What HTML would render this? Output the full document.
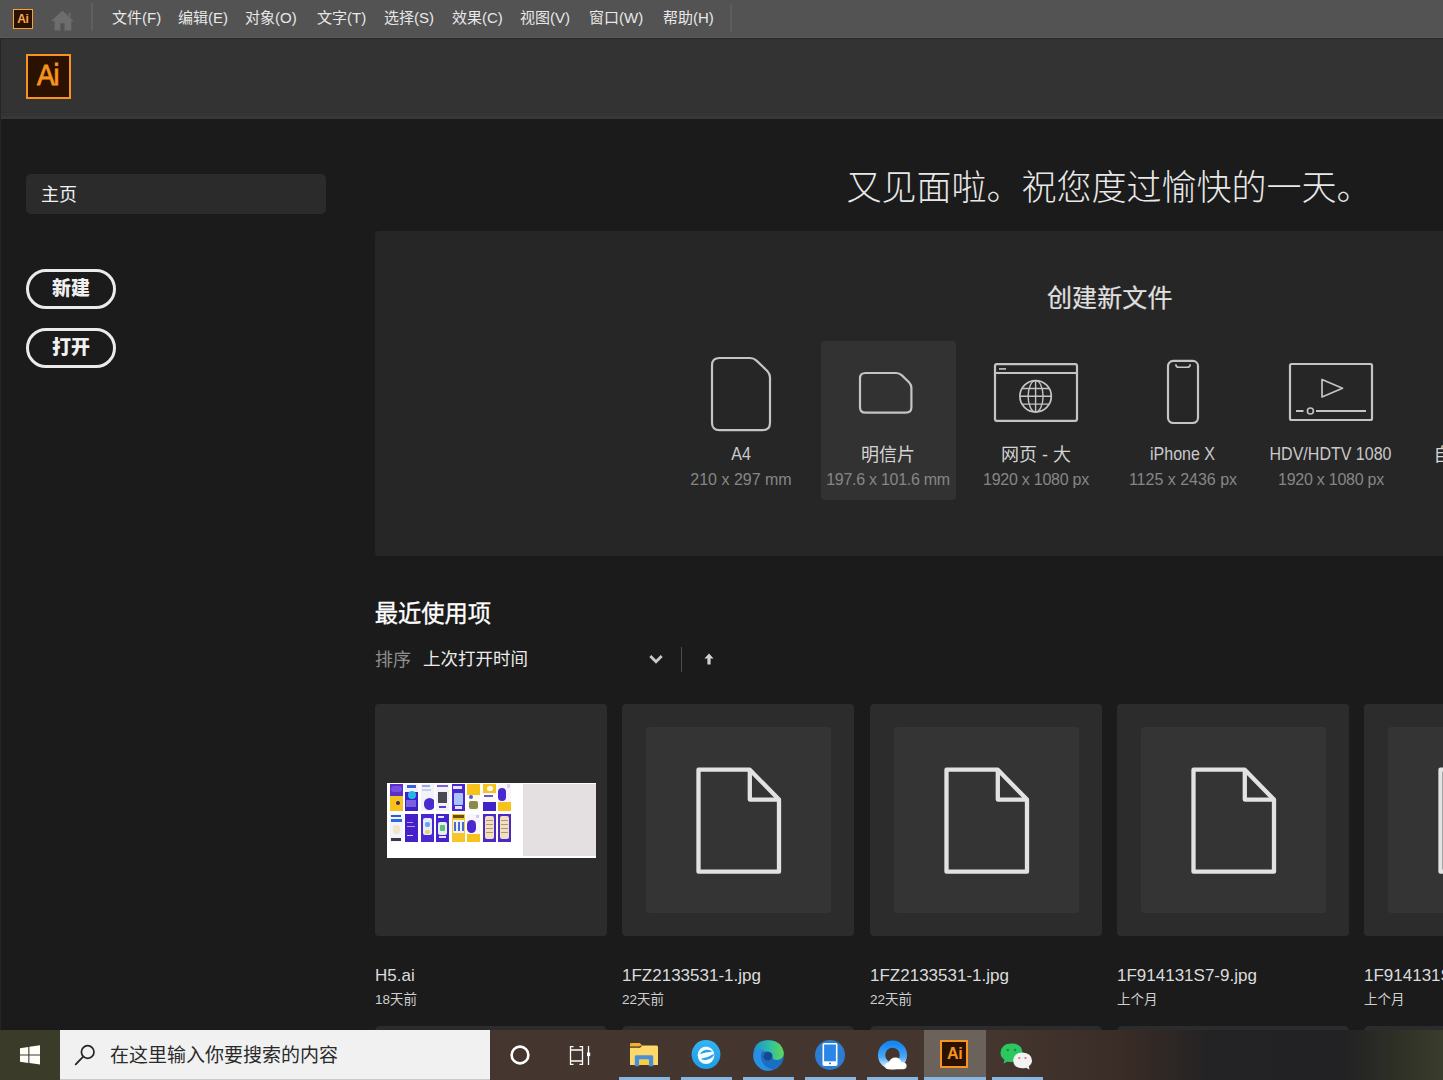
<!DOCTYPE html>
<html lang="zh-CN">
<head>
<meta charset="utf-8">
<title>Adobe Illustrator</title>
<style>
*{box-sizing:border-box;margin:0;padding:0}
html,body{width:1443px;height:1080px;overflow:hidden;background:#1b1b1b}
body{position:relative;font-family:"Liberation Sans","Noto Sans CJK SC",sans-serif;color:#e6e6e6}
.abs{position:absolute}
.t{position:absolute;white-space:nowrap;line-height:1}
/* menubar */
#menubar{left:0;top:0;width:1443px;height:38px;background:#535353;border-bottom:1px solid #5b5b5b}
#menubar .mi{position:absolute;top:9px;font-size:15px;line-height:18px;color:#e8e8e8;white-space:nowrap}
#hdr{left:0;top:38px;width:1443px;height:81px;background:linear-gradient(180deg,#333 0,#333 73px,#2f2f2f 73px,#2f2f2f 74px,#373737 74px,#373737 75px,#333 75px,#333 77px,#383838 77px,#383838 80px);border-top:1px solid #272727}
/* sidebar */
#home{left:26px;top:174px;width:300px;height:40px;border-radius:5px;background:#2b2b2b}
.pill{position:absolute;left:26px;width:90px;height:40px;border:3px solid #ebebeb;border-radius:20px;font-size:19px;font-weight:900;color:#f0f0f0;text-align:center;line-height:34px}
/* panel */
#panel{left:375px;top:231px;width:1068px;height:325px;background:#262626;overflow:hidden;border-radius:4px 0 0 4px}
.pname{position:absolute;top:213px;width:200px;margin-left:-100px;text-align:center;font-size:18px;line-height:20px;color:#d4d4d4;white-space:nowrap;font-weight:400}
.pname i{font-style:normal;color:#cacaca;display:inline-block;transform:scaleX(.89);transform-origin:50% 50%}
.pdim{position:absolute;top:240px;width:200px;margin-left:-100px;text-align:center;font-size:16px;line-height:18px;color:#868686;white-space:nowrap}
/* recents */
.card{position:absolute;top:704px;width:232px;height:232px;border-radius:4px;background:#2c2c2c}
.card .in{position:absolute;left:24px;top:23px;width:185px;height:186px;border-radius:3px;background:#343434}
.card2{position:absolute;top:1026px;width:232px;height:10px;border-radius:5px 5px 0 0;background:#2c2c2c}
.fn{position:absolute;top:965.600px;font-size:17px;line-height:20px;color:#dcdcdc;white-space:nowrap}
.fd{position:absolute;top:992px;font-size:13.500px;line-height:16px;color:#d0d0d0;white-space:nowrap}
/* taskbar */
#taskbar{left:0;top:1030px;width:1443px;height:50px;background:linear-gradient(90deg,#3b3b29 0,#3b3b29 60px,#45362e 60px,#44362f 1000px,#3a2c26 1120px,#2e2725 1170px,#232224 1208px,#222224 1345px,#2b2d26 1385px,#3a3c2c 1443px)}
.ul{position:absolute;top:47px;width:51px;height:3px;background:#86b6e4}
</style>
</head>
<body>

<!-- ===== menubar ===== -->
<div id="menubar" class="abs">
  <div class="abs" style="left:13px;top:8.500px;width:20px;height:20px;background:#2b1200;border:1.500px solid #f9a040"></div>
  <div class="t" style="left:17.300px;top:12.700px;font-size:12px;font-weight:bold;color:#fba850;letter-spacing:-0.400px">Ai</div>
  <svg class="abs" style="left:50px;top:10px" width="25" height="21" viewBox="0 0 25 21"><path d="M12.400 0.400 L23.800 11.300 H21.300 V20.500 H14.500 V13.200 H10.400 V20.500 H4.600 V11.300 H1 Z" fill="#6d6d6d"/><rect x="18.300" y="2.800" width="2.400" height="5" fill="#676767"/></svg>
  <div class="abs" style="left:91px;top:3px;width:2px;height:28px;background:#5e5e5e"></div>
  <div class="mi" style="left:112px">文件(F)</div>
  <div class="mi" style="left:178px">编辑(E)</div>
  <div class="mi" style="left:245px">对象(O)</div>
  <div class="mi" style="left:317px">文字(T)</div>
  <div class="mi" style="left:384px">选择(S)</div>
  <div class="mi" style="left:452px">效果(C)</div>
  <div class="mi" style="left:520px">视图(V)</div>
  <div class="mi" style="left:589px">窗口(W)</div>
  <div class="mi" style="left:663px">帮助(H)</div>
  <div class="abs" style="left:729.500px;top:4px;width:2px;height:28px;background:#5d5d5d"></div>
</div>

<!-- ===== header ===== -->
<div id="hdr" class="abs">
  <div class="abs" style="left:26px;top:15px;width:45px;height:45px;background:#2b1200;border:2px solid #f7931e"></div>
  <div class="t" style="left:36.800px;top:22.400px;font-size:29px;color:#f7931e;letter-spacing:-1.400px;-webkit-text-stroke:0.800px #f7931e;transform:scaleX(.92);transform-origin:0 0">Ai</div>
</div>

<!-- ===== sidebar ===== -->
<div class="abs" style="left:0;top:39px;width:1px;height:80px;background:#262626"></div>
<div class="abs" style="left:0;top:119px;width:1px;height:911px;background:#252525"></div>
<div id="home" class="abs"></div>
<div class="t" style="left:41px;top:186px;font-size:18px;color:#f2f2f2">主页</div>
<div class="pill" style="top:269px">新建</div>
<div class="pill" style="top:328px">打开</div>

<!-- ===== greeting ===== -->
<div class="t" id="greet" style="left:846.500px;top:170px;font-size:35px;font-weight:300;color:#e8e8e8">又见面啦。祝您度过愉快的一天。</div>

<!-- ===== new file panel ===== -->
<div id="panel" class="abs">
  <div class="t" id="ptitle" style="left:672px;top:55px;font-size:25.100px;color:#e0e0e0;-webkit-text-stroke:0.200px #e0e0e0">创建新文件</div>
  <div class="abs" style="left:446px;top:110px;width:135px;height:159px;border-radius:4px;background:#323232"></div>

  <!-- A4 icon : abs 711-771 x 357-431 -->
  <svg class="abs" style="left:334px;top:124px" width="64" height="78" viewBox="0 0 64 78"><path d="M10.500 3 H41 Q44.800 3 47.500 5.600 L58.300 16 Q61 18.800 61 22.500 V67.700 Q61 75.200 53.500 75.200 H10.500 Q3 75.200 3 67.700 V10.500 Q3 3 10.500 3 Z" fill="none" stroke="#c4c4c4" stroke-width="2.200"/></svg>
  <div class="pname" style="left:366px"><i>A4</i></div>
  <div class="pdim" style="left:366px">210 x 297 mm</div>
  <!-- postcard icon: abs 859-912 x 372-414 -->
  <svg class="abs" style="left:482px;top:139px" width="58" height="46" viewBox="0 0 58 46"><path d="M8.500 3 H39.200 Q42.400 3 44.900 5.400 L52 12.300 Q54.400 14.800 54.400 17.900 V37.300 Q54.400 42.700 49 42.700 H8.500 Q3 42.700 3 37.300 V8.500 Q3 3 8.500 3 Z" fill="none" stroke="#c4c4c4" stroke-width="2.200"/></svg>
  <div class="pname" style="left:513px;top:214px">明信片</div>
  <div class="pdim" style="left:513px;letter-spacing:-0.28px">197.6 x 101.6 mm</div>
  <!-- web icon: abs 994-1078 x 363-421 -->
  <svg class="abs" style="left:617px;top:130px" width="88" height="62" viewBox="0 0 88 62"><g fill="none" stroke="#c4c4c4" stroke-width="2.200"><rect x="3" y="3.200" width="82" height="56.600" rx="1.800"/><path d="M3 12 H85"/><path d="M7 7.900 H14" stroke-width="1.600"/><circle cx="43.600" cy="35.300" r="15.700" stroke-width="1.700"/><g stroke-width="1.400"><ellipse cx="43.600" cy="35.300" rx="7.500" ry="15.700"/><path d="M43.600 19.600 V51 M28 35.300 H59.200 M30.200 27.500 H57 M30.200 43.100 H57"/></g></g></svg>
  <div class="pname" style="left:661px;top:214px">网页 - 大</div>
  <div class="pdim" style="left:661px;letter-spacing:-0.25px">1920 x 1080 px</div>
  <!-- phone icon: abs 1167-1199 x 359-424 -->
  <svg class="abs" style="left:790px;top:126px" width="36" height="69" viewBox="0 0 36 69"><g fill="none" stroke="#c4c4c4" stroke-width="2.200"><rect x="3" y="3.900" width="30" height="62.100" rx="5.200"/><path d="M10.800 7.200 Q10.800 10.300 14 10.300 H22 Q25.200 10.300 25.200 7.200" stroke-width="1.600"/></g></svg>
  <div class="pname" style="left:808px"><i>iPhone X</i></div>
  <div class="pdim" style="left:808px">1125 x 2436 px</div>
  <!-- video icon: abs 1289-1373 x 363-421 -->
  <svg class="abs" style="left:912px;top:130px" width="88" height="62" viewBox="0 0 88 62"><g fill="none" stroke="#c4c4c4" stroke-width="2.200"><rect x="3" y="3" width="82" height="56" rx="1.500"/><path d="M35 18.500 V36 L55.500 27.300 Z" stroke-width="1.700" stroke-linejoin="round"/><path d="M9 50 H16.500 M29 50 H79" stroke-width="1.800"/><circle cx="23.400" cy="50" r="3" stroke-width="1.600"/></g></svg>
  <div class="pname" style="left:956px"><i>HDV/HDTV 1080</i></div>
  <div class="pdim" style="left:956px;letter-spacing:-0.25px">1920 x 1080 px</div>
  <div class="pname" style="left:1103.5px;top:214px">自定义大小</div>

</div>

<!-- ===== recents ===== -->
<div class="t" style="left:374.700px;top:603px;font-size:23.300px;font-weight:400;-webkit-text-stroke:0.350px #fff;color:#ffffff">最近使用项</div>
<div class="t" style="left:375px;top:651px;font-size:18px;color:#8e8e8e">排序</div>
<div class="t" style="left:423px;top:651px;font-size:17.5px;color:#ececec">上次打开时间</div>
<svg class="abs" style="left:648px;top:652px" width="16" height="14" viewBox="0 0 16 14"><path d="M2.300 4 L8 9.700 L13.700 4" fill="none" stroke="#cacaca" stroke-width="2.800"/></svg>
<div class="abs" style="left:681px;top:647px;width:1px;height:25px;background:#4c4c4c"></div>
<svg class="abs" style="left:703px;top:653px" width="12" height="12" viewBox="0 0 12 12"><path d="M6 0.6 L10.6 5.6 H7.6 V11.4 H4.4 V5.6 H1.4 Z" fill="#d0d0d0"/></svg>

<div class="card" style="left:375px"><div class="abs" style="left:12px;top:79px;width:209px;height:75px;background:#ffffff"><div class="abs" style="left:136px;top:1px;width:73px;height:72px;background:#e4e0e1"></div><div class="abs" style="left:3.0px;top:1px;width:13px;height:27px;overflow:hidden;background:#f7c21a"><div class="abs" style="left:0px;top:0px;width:13px;height:12px;background:#5a30cc;border-radius:0px"></div><div class="abs" style="left:1px;top:2px;width:11px;height:6px;background:#7a4fe0;border-radius:3px"></div><div class="abs" style="left:6px;top:17px;width:4px;height:4px;background:#3a2a6a;border-radius:2px"></div></div><div class="abs" style="left:18.4px;top:1px;width:13px;height:27px;overflow:hidden;background:#3b22c4"><div class="abs" style="left:0px;top:0px;width:13px;height:8px;background:#f2f4fc;border-radius:0px"></div><div class="abs" style="left:2px;top:1px;width:9px;height:3px;background:#3a5fe0;border-radius:0px"></div><div class="abs" style="left:3px;top:7px;width:8px;height:8px;background:#25b6e6;border-radius:4px"></div><div class="abs" style="left:1px;top:16px;width:10px;height:7px;background:#7a62e0;border-radius:0px"></div></div><div class="abs" style="left:33.9px;top:1px;width:13px;height:27px;overflow:hidden;background:#f1f3fb"><div class="abs" style="left:1px;top:1px;width:8px;height:2px;background:#9aa6e8;border-radius:0px"></div><div class="abs" style="left:1px;top:5px;width:9px;height:2px;background:#c9cff2;border-radius:0px"></div><div class="abs" style="left:3px;top:14px;width:11px;height:12px;background:#4a2bd0;border-radius:6px"></div></div><div class="abs" style="left:49.3px;top:1px;width:13px;height:27px;overflow:hidden;background:#f4f2f8"><div class="abs" style="left:1px;top:1px;width:11px;height:2px;background:#7d5fd8;border-radius:0px"></div><div class="abs" style="left:2px;top:8px;width:9px;height:11px;background:#4a4a52;border-radius:0px"></div><div class="abs" style="left:3px;top:22px;width:7px;height:2px;background:#5a3ad0;border-radius:0px"></div></div><div class="abs" style="left:64.8px;top:1px;width:13px;height:27px;overflow:hidden;background:#4a28d0"><div class="abs" style="left:1px;top:2px;width:9px;height:3px;background:#e8e4ff;border-radius:0px"></div><div class="abs" style="left:2px;top:9px;width:9px;height:12px;background:#a9c4f6;border-radius:1px"></div><div class="abs" style="left:3px;top:22px;width:7px;height:3px;background:#e8e4ff;border-radius:0px"></div></div><div class="abs" style="left:80.2px;top:1px;width:13px;height:27px;overflow:hidden;background:#fbfaf6"><div class="abs" style="left:0px;top:0px;width:13px;height:11px;background:#f7c21a;border-radius:0px"></div><div class="abs" style="left:2px;top:11px;width:4px;height:4px;background:#4a5ad0;border-radius:2px"></div><div class="abs" style="left:2px;top:17px;width:9px;height:8px;background:#8a8a4a;border-radius:2px"></div></div><div class="abs" style="left:95.7px;top:1px;width:13px;height:27px;overflow:hidden;background:#fbfaf6"><div class="abs" style="left:0px;top:0px;width:13px;height:9px;background:#f7c21a;border-radius:0px"></div><div class="abs" style="left:4px;top:2px;width:6px;height:5px;background:#ffffff;border-radius:3px"></div><div class="abs" style="left:0px;top:18px;width:13px;height:9px;background:#3f25c6;border-radius:0px"></div><div class="abs" style="left:1px;top:11px;width:9px;height:2px;background:#6a5ac8;border-radius:0px"></div></div><div class="abs" style="left:111.1px;top:1px;width:13px;height:27px;overflow:hidden;background:#f7c21a"><div class="abs" style="left:0px;top:0px;width:13px;height:18px;background:#f7f5fa;border-radius:0px"></div><div class="abs" style="left:0px;top:4px;width:8px;height:13px;background:#4a28cf;border-radius:6px"></div><div class="abs" style="left:9px;top:0px;width:3px;height:4px;background:#d8d4f0;border-radius:0px"></div></div><div class="abs" style="left:3.0px;top:31px;width:13px;height:28px;overflow:hidden;background:#f3f5fc"><div class="abs" style="left:1px;top:1px;width:10px;height:2px;background:#3a55d8;border-radius:0px"></div><div class="abs" style="left:1px;top:5px;width:11px;height:3px;background:#2a6ae0;border-radius:0px"></div><div class="abs" style="left:3px;top:11px;width:7px;height:9px;background:#f1e6c8;border-radius:3px"></div><div class="abs" style="left:1px;top:24px;width:10px;height:3px;background:#3a3a4a;border-radius:0px"></div></div><div class="abs" style="left:18.4px;top:31px;width:13px;height:28px;overflow:hidden;background:#4420c8"><div class="abs" style="left:2px;top:8px;width:6px;height:1px;background:#c090f0;border-radius:0px"></div><div class="abs" style="left:2px;top:12px;width:8px;height:1px;background:#c090f0;border-radius:0px"></div><div class="abs" style="left:2px;top:21px;width:6px;height:1px;background:#e0d0ff;border-radius:0px"></div></div><div class="abs" style="left:33.9px;top:31px;width:13px;height:28px;overflow:hidden;background:#4a28d0"><div class="abs" style="left:2px;top:4px;width:9px;height:17px;background:#e6ecfa;border-radius:2px"></div><div class="abs" style="left:4px;top:8px;width:5px;height:5px;background:#6aa0f0;border-radius:2px"></div><div class="abs" style="left:4px;top:16px;width:5px;height:4px;background:#f0d060;border-radius:2px"></div></div><div class="abs" style="left:49.3px;top:31px;width:13px;height:28px;overflow:hidden;background:#4523cc"><div class="abs" style="left:2px;top:2px;width:6px;height:2px;background:#e8e0ff;border-radius:0px"></div><div class="abs" style="left:2px;top:8px;width:9px;height:13px;background:#e4f0e8;border-radius:2px"></div><div class="abs" style="left:4px;top:11px;width:5px;height:6px;background:#5ac080;border-radius:1px"></div><div class="abs" style="left:3px;top:22px;width:7px;height:2px;background:#e8e0ff;border-radius:0px"></div></div><div class="abs" style="left:64.8px;top:31px;width:13px;height:28px;overflow:hidden;background:#f6c62a"><div class="abs" style="left:1px;top:1px;width:11px;height:3px;background:#6a4a20;border-radius:0px"></div><div class="abs" style="left:1px;top:6px;width:11px;height:13px;background:#eef2fa;border-radius:0px"></div><div class="abs" style="left:2px;top:8px;width:2px;height:9px;background:#4a6ad0;border-radius:0px"></div><div class="abs" style="left:6px;top:8px;width:2px;height:9px;background:#4a6ad0;border-radius:0px"></div><div class="abs" style="left:10px;top:8px;width:2px;height:9px;background:#4a6ad0;border-radius:0px"></div></div><div class="abs" style="left:80.2px;top:31px;width:13px;height:28px;overflow:hidden;background:#f7f5fa"><div class="abs" style="left:0px;top:6px;width:9px;height:13px;background:#4a28cf;border-radius:6px"></div><div class="abs" style="left:0px;top:20px;width:13px;height:8px;background:#f7c21a;border-radius:0px"></div><div class="abs" style="left:9px;top:1px;width:3px;height:3px;background:#d0c8f0;border-radius:0px"></div></div><div class="abs" style="left:95.7px;top:31px;width:13px;height:28px;overflow:hidden;background:#4a2ac0"><div class="abs" style="left:2px;top:2px;width:9px;height:23px;background:#f1dfc0;border-radius:2px"></div><div class="abs" style="left:3px;top:6px;width:7px;height:1px;background:#b09870;border-radius:0px"></div><div class="abs" style="left:3px;top:10px;width:7px;height:1px;background:#b09870;border-radius:0px"></div><div class="abs" style="left:3px;top:14px;width:7px;height:1px;background:#b09870;border-radius:0px"></div><div class="abs" style="left:3px;top:18px;width:7px;height:1px;background:#b09870;border-radius:0px"></div></div><div class="abs" style="left:111.1px;top:31px;width:13px;height:28px;overflow:hidden;background:#4a2ac0"><div class="abs" style="left:2px;top:2px;width:9px;height:23px;background:#f1dfc0;border-radius:2px"></div><div class="abs" style="left:3px;top:6px;width:7px;height:1px;background:#b09870;border-radius:0px"></div><div class="abs" style="left:3px;top:10px;width:7px;height:1px;background:#b09870;border-radius:0px"></div><div class="abs" style="left:3px;top:14px;width:7px;height:1px;background:#b09870;border-radius:0px"></div><div class="abs" style="left:3px;top:18px;width:7px;height:1px;background:#b09870;border-radius:0px"></div></div></div></div>
<div class="fn" style="left:375px">H5.ai</div>
<div class="fd" style="left:375px">18天前</div>
<div class="card2" style="left:375px"></div>
<div class="card" style="left:622px"><div class="in"></div><svg class="abs" style="left:72px;top:61px" width="90" height="110" viewBox="0 0 90 110"><g fill="none" stroke="#e2e2e2" stroke-width="4.300" stroke-linejoin="round"><path d="M4.500 4.700 H55.800 L85 34.600 V106.700 H4.500 Z"/><path d="M55.800 4.700 V34.600 H85"/></g></svg></div>
<div class="fn" style="left:622px">1FZ2133531-1.jpg</div>
<div class="fd" style="left:622px">22天前</div>
<div class="card2" style="left:622px"></div>
<div class="card" style="left:869.5px"><div class="in"></div><svg class="abs" style="left:72px;top:61px" width="90" height="110" viewBox="0 0 90 110"><g fill="none" stroke="#e2e2e2" stroke-width="4.300" stroke-linejoin="round"><path d="M4.500 4.700 H55.800 L85 34.600 V106.700 H4.500 Z"/><path d="M55.800 4.700 V34.600 H85"/></g></svg></div>
<div class="fn" style="left:870px">1FZ2133531-1.jpg</div>
<div class="fd" style="left:870px">22天前</div>
<div class="card2" style="left:869.5px"></div>
<div class="card" style="left:1117px"><div class="in"></div><svg class="abs" style="left:72px;top:61px" width="90" height="110" viewBox="0 0 90 110"><g fill="none" stroke="#e2e2e2" stroke-width="4.300" stroke-linejoin="round"><path d="M4.500 4.700 H55.800 L85 34.600 V106.700 H4.500 Z"/><path d="M55.800 4.700 V34.600 H85"/></g></svg></div>
<div class="fn" style="left:1117px">1F914131S7-9.jpg</div>
<div class="fd" style="left:1117px">上个月</div>
<div class="card2" style="left:1117px"></div>
<div class="card" style="left:1364px"><div class="in"></div><svg class="abs" style="left:72px;top:61px" width="90" height="110" viewBox="0 0 90 110"><g fill="none" stroke="#e2e2e2" stroke-width="4.300" stroke-linejoin="round"><path d="M4.500 4.700 H55.800 L85 34.600 V106.700 H4.500 Z"/><path d="M55.800 4.700 V34.600 H85"/></g></svg></div>
<div class="fn" style="left:1364px">1F914131S7-9.jpg</div>
<div class="fd" style="left:1364px">上个月</div>
<div class="card2" style="left:1364px"></div>


<!-- ===== taskbar ===== -->
<div id="taskbar" class="abs">

  <!-- start logo: abs 20-40 x 1045-1065 (taskbar origin y=1030) -->
  <svg class="abs" style="left:19px;top:14px" width="22" height="22" viewBox="0 0 22 22"><path d="M1 4.200 L9.300 3 V10.400 H1 Z M10.400 2.850 L21 1.300 V10.400 H10.400 Z M1 11.500 H9.300 V18.900 L1 17.750 Z M10.400 11.500 H21 V20.600 L10.400 19.050 Z" fill="#fffffa"/></svg>
  <!-- search box -->
  <div class="abs" style="left:60.400px;top:0;width:429.600px;height:50px;background:#f1f1f1;border-bottom:1px solid #c9c9c9"></div>
  <svg class="abs" style="left:74px;top:14px" width="24" height="22" viewBox="0 0 24 22"><circle cx="13.700" cy="8" r="6.300" fill="none" stroke="#262626" stroke-width="1.700"/><path d="M9.200 12.600 L1.700 20.300" stroke="#262626" stroke-width="1.800" stroke-linecap="round"/></svg>
  <div class="t" id="search" style="left:110px;top:16px;font-size:19px;color:#2a2a2a">在这里输入你要搜索的内容</div>
  <!-- cortana -->
  <svg class="abs" style="left:508px;top:13px" width="24" height="24" viewBox="0 0 24 24"><circle cx="12" cy="12" r="8.400" fill="none" stroke="#ffffff" stroke-width="2.600"/></svg>
  <!-- task view -->
  <svg class="abs" style="left:568px;top:15px" width="24" height="22" viewBox="0 0 24 22"><g fill="none" stroke="#ffffff" stroke-width="1.300"><path d="M2.500 1 V20 M14.500 1 V20 M2.500 5 H14.500 M2.500 16 H14.500 M2.500 1.650 H5.500 M11.500 1.650 H14.500 M2.500 19.350 H5.500 M11.500 19.350 H14.500"/><path d="M20.500 1 V20"/></g><rect x="19" y="7.500" width="3.200" height="3.600" fill="#ffffff"/></svg>
  <!-- explorer -->
  <svg class="abs" style="left:629px;top:11px" width="30" height="27" viewBox="0 0 30 27"><path d="M1 3.500 Q1 2 2.500 2 H10.500 L13.500 4.800 H5 Z" fill="#eeb02a"/><path d="M1 3.500 V24 H29 V6 Q29 4.600 27.500 4.600 H13.300 L11 6.800 H1 Z" fill="#ffd86a"/><path d="M1 3.500 Q1 2 2.500 2 H10.500 L12.300 3.700 L10.300 5.600 H1 Z" fill="#f0b22e"/><path d="M5.800 25.200 V15.500 Q5.800 14.200 7.200 14.200 H22.800 Q24.200 14.200 24.200 15.500 V25.200 H19.800 V18.600 H10.200 V25.200 Z" fill="#4a90d9"/><rect x="10.200" y="18.600" width="9.600" height="5.400" fill="#f9cb40"/></svg>
  <div class="ul" style="left:619px"></div>
  <!-- 360 browser -->
  <svg class="abs" style="left:690px;top:9px" width="32" height="32" viewBox="0 0 32 32"><defs><linearGradient id="g360" x1="0" y1="0" x2="0" y2="1"><stop offset="0" stop-color="#35b4f2"/><stop offset="1" stop-color="#1f9de6"/></linearGradient></defs><circle cx="16" cy="15.500" r="14.400" fill="url(#g360)"/><ellipse cx="16" cy="16.200" rx="8.300" ry="8.800" fill="#f2fdff"/><path d="M11 14.200 Q15 9.800 21 12.400 Q16 12.200 11 14.200 Z" fill="#2a9fe6" stroke="#2a9fe6" stroke-width="1.200" stroke-linejoin="round"/><path d="M12 20 Q18 19.600 23.500 15.800 Q20 21.500 12 20 Z" fill="#2a9fe6" stroke="#2a9fe6" stroke-width="1.200" stroke-linejoin="round"/></svg>
  <div class="ul" style="left:681px"></div>
  <!-- edge -->
  <svg class="abs" style="left:752px;top:9px" width="33" height="33" viewBox="0 0 33 33"><defs><linearGradient id="eg1" x1="0" y1="0" x2="1" y2="0"><stop offset="0" stop-color="#1b8fd8"/><stop offset="0.550" stop-color="#2fbfa0"/><stop offset="1" stop-color="#63d656"/></linearGradient></defs><circle cx="16.500" cy="16.500" r="15.300" fill="#1a6fc4"/><path d="M1.300 15 Q2.500 1.200 16.500 1.200 Q29 1.200 31.700 13 Q32.500 19.500 26 21 Q20.500 21.500 20.500 18 Q21.500 13.500 16 12.500 Q5 11.500 1.300 15 Z" fill="url(#eg1)"/><path d="M1.300 16 Q4 9 12 10 Q7.500 14 9.500 21 Q12.500 29.500 22 30.600 Q12 34 5.500 27 Q1 22 1.300 16 Z" fill="#2a8fe0"/><circle cx="15.800" cy="17.200" r="4.300" fill="#17488f"/></svg>
  <div class="ul" style="left:743px"></div>
  <!-- your phone -->
  <svg class="abs" style="left:814px;top:9px" width="32" height="32" viewBox="0 0 32 32"><circle cx="16" cy="16" r="15" fill="#2d7dd2"/><rect x="9.300" y="4.800" width="13.400" height="21.500" rx="1" fill="#2a86e8" stroke="#ffffff" stroke-width="1.600"/><rect x="9.300" y="22.300" width="13.400" height="4" fill="#ffffff"/><rect x="15" y="23.600" width="2" height="1.600" fill="#2d7dd2"/></svg>
  <div class="ul" style="left:805px"></div>
  <!-- qq browser -->
  <svg class="abs" style="left:876px;top:9px" width="34" height="33" viewBox="0 0 34 33"><defs><linearGradient id="qg" x1="0" y1="0" x2="0" y2="1"><stop offset="0" stop-color="#1687f2"/><stop offset="0.600" stop-color="#4aa8f8"/><stop offset="1" stop-color="#cfe8ff"/></linearGradient></defs><circle cx="16.500" cy="16" r="10.900" fill="none" stroke="url(#qg)" stroke-width="7.300"/><path d="M13 30.300 Q9 30.300 9 26.800 Q9 23.800 12.800 23.500 Q14.500 18.600 19.500 18.600 Q24 18.600 25.600 23.300 Q30.600 23 30.600 26.800 Q30.600 30.300 26.800 30.300 Z" fill="#ffffff"/></svg>
  <div class="ul" style="left:867px"></div>
  <!-- Ai active -->
  <div class="abs" style="left:924px;top:0;width:62px;height:50px;background:#6c625c"></div>
  <div class="abs" style="left:940px;top:10px;width:28px;height:27.500px;background:#2b1200;border:2px solid #f7931e"></div>
  <div class="t" style="left:947px;top:15.700px;font-size:16px;font-weight:bold;color:#f7931e;letter-spacing:-0.300px">Ai</div>
  <div class="ul" style="left:924px;width:62px"></div>
  <!-- wechat -->
  <svg class="abs" style="left:999px;top:11.500px" width="36" height="32" viewBox="0 0 36 32"><path d="M12.500 1.500 Q23 1.500 23.500 11 Q23 19.500 12.500 20 Q10 20 8.500 19.400 L4.500 21.500 L5.500 17.800 Q1.500 15 1.500 11 Q2 1.500 12.500 1.500 Z" fill="#2dc760"/><circle cx="8.800" cy="8" r="1.300" fill="#1b8f44"/><circle cx="16" cy="8" r="1.300" fill="#1b8f44"/><path d="M23.500 10.500 Q32.500 11 33 18.500 Q33 22 29.800 24.300 L30.500 27.500 L27 25.800 Q25.500 26.300 23.500 26.300 Q14.500 26 14.200 18.500 Q14.500 11 23.500 10.500 Z" fill="#f2f2f2"/><circle cx="20.300" cy="16" r="1.100" fill="#e06a7a"/><circle cx="26.500" cy="16" r="1.100" fill="#e06a7a"/></svg>
  <div class="ul" style="left:992px"></div>

</div>

</body>
</html>
